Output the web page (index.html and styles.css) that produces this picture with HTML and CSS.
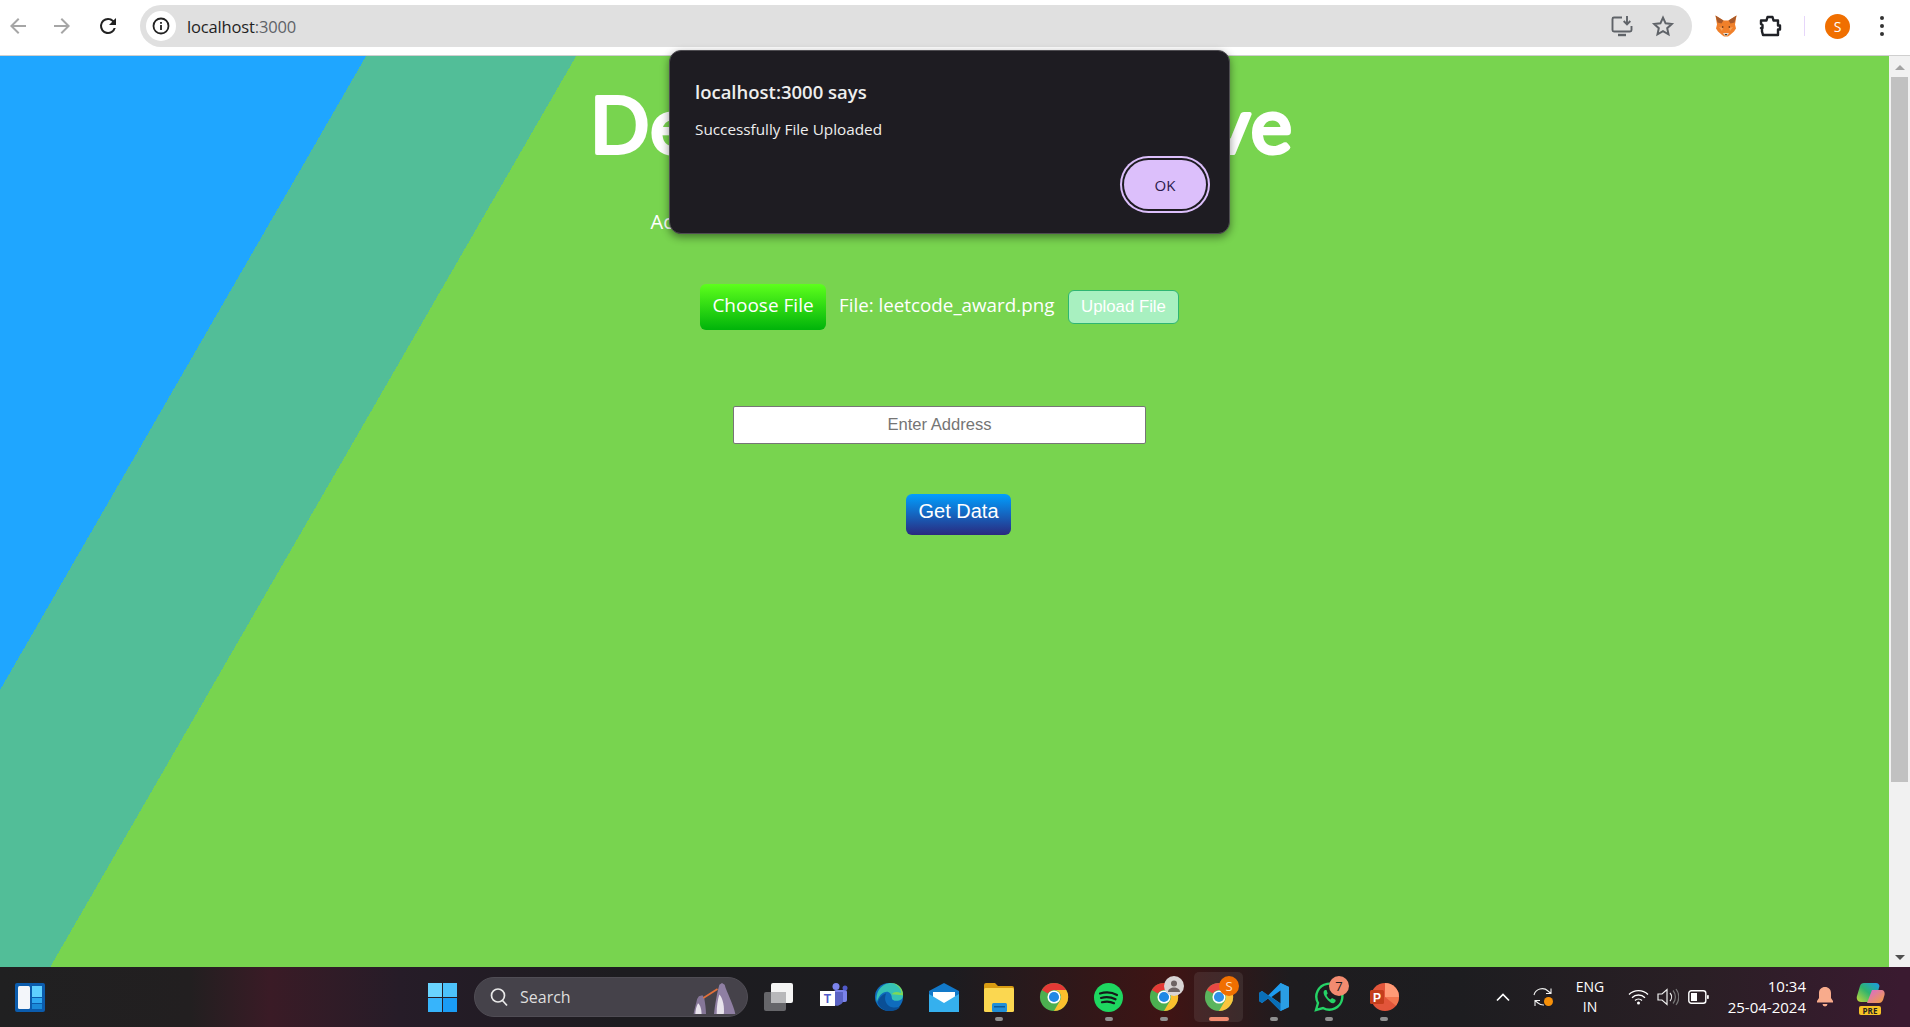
FILE: index.html
```html
<!DOCTYPE html>
<html lang="en">
<head>
  <meta charset="UTF-8">
  <title>localhost:3000</title>
  <link rel="stylesheet" href="styles.css">
</head>
<body>

  <svg class="defs" width="0" height="0">
    <symbol id="chrome" viewBox="0 0 32 32">
      <circle cx="16" cy="16" r="15" fill="#4caf50"/>
      <path d="M3 8.5A15 15 0 0 1 29 8.5H16a7.5 7.5 0 0 0-6.5 3.75z" fill="#e53935"/>
      <path d="M29 8.5A15 15 0 0 1 16 31l6.5-11.25A7.5 7.5 0 0 0 22.5 12.25 7.5 7.5 0 0 0 16 8.5z" fill="#fbc02d"/>
      <circle cx="16" cy="16" r="7" fill="#fff"/>
      <circle cx="16" cy="16" r="5.4" fill="#1e88e5"/>
    </symbol>
  </svg>

  <header class="toolbar">
    <div class="nav-btn">
      <svg width="24" height="24" viewBox="0 0 24 24"><path fill="#a6a6a6" d="M20 11H7.83l5.59-5.59L12 4l-8 8 8 8 1.41-1.41L7.83 13H20z"/></svg>
    </div>
    <div class="nav-btn">
      <svg width="24" height="24" viewBox="0 0 24 24"><path fill="#a6a6a6" d="M4 11h12.17l-5.59-5.59L12 4l8 8-8 8-1.41-1.41L16.17 13H4z"/></svg>
    </div>
    <div class="nav-btn reload">
      <svg width="24" height="24" viewBox="0 0 24 24"><path fill="#222" d="M17.65 6.35A7.95 7.95 0 0 0 12 4a8 8 0 1 0 7.73 10h-2.08A6 6 0 1 1 12 6c1.66 0 3.14.69 4.22 1.78L13 11h7V4z"/></svg>
    </div>

    <div class="omnibox">
      <div class="site-info">
        <svg width="20" height="20" viewBox="0 0 20 20"><circle cx="10" cy="10" r="7.5" fill="none" stroke="#222" stroke-width="1.8"/><rect x="9.1" y="9" width="1.8" height="5" fill="#222"/><rect x="9.1" y="6" width="1.8" height="1.8" fill="#222"/></svg>
      </div>
      <div class="url">localhost<span>:3000</span></div>
      <div class="omni-icons">
        <svg width="24" height="24" viewBox="0 0 24 24" fill="none" stroke="#5f6368" stroke-width="1.9"><path d="M12 3.5H4a1.5 1.5 0 0 0-1.5 1.5v11A1.5 1.5 0 0 0 4 17.5h16a1.5 1.5 0 0 0 1.5-1.5v-4"/><path d="M8 21h8" stroke-width="2.4"/><path d="M17 2v8M13.7 7l3.3 3.3L20.3 7"/></svg>
        <svg width="24" height="24" viewBox="0 0 24 24" fill="none" stroke="#5f6368" stroke-width="2"><path d="M12 3.6l2.6 5.7 6.2.7-4.6 4.2 1.3 6.1-5.5-3.1-5.5 3.1 1.3-6.1L3.200 10l6.200-.7z"/></svg>
      </div>
    </div>

    <div class="ext fox">
      <svg width="24" height="24" viewBox="0 0 24 24">
        <path fill="#f0802a" d="M1.500 1.500l8 5h5l8-5-1.500 9 1 4-2 3-4 3.500-2 1.500h-4l-2-1.500-4-3.500-2-3 1-4z"/>
        <path fill="#a85a2a" d="M9.500 6.500L1.500 1.500l2 7 4 1zM14.500 6.500l8-5-2 7-4 1z"/>
        <path fill="#f6a45b" d="M5 13l4 1-1 3zM19 13l-4 1 1 3z"/>
        <path fill="#5e3418" d="M8 12l2 1-2 1zM16 12l-2 1 2 1z"/>
        <path fill="#e4d8cc" d="M9 19h6l-1.500 2.500h-3z"/>
        <path fill="#222" d="M10.500 20h3l-1.500 1.500z"/>
      </svg>
    </div>
    <div class="ext puzzle">
      <svg width="24" height="24" viewBox="0 0 24 24" fill="none" stroke="#1f2126" stroke-width="2.4" stroke-linejoin="round"><path d="M3 6.500h5.500l1-3.500h5l1 3.500H20v5h2v4h-2V21H5l-1-3.500V15l-1-1h1.500v-3L3 10z"/></svg>
    </div>
    <div class="ext-sep"></div>
    <div class="avatar">S</div>
    <div class="chrome-menu"><i></i><i></i><i></i></div>
  </header>

  <div class="viewport">
    <main class="page">
      <h1 class="app-title">
        <svg width="720" height="100" viewBox="0 0 720 100"><text class="title-text" x="360" y="75" textLength="702" lengthAdjust="spacing">Decentralized Drive</text></svg>
      </h1>
      <p class="account">Account: Not connected to a wallet yet</p>

      <form class="upload-row">
        <label class="choose-btn">Choose File</label>
        <span class="file-name">File: leetcode_award.png</span>
        <button type="button" class="upload-btn">Upload File</button>
      </form>

      <input class="address-input" type="text" placeholder="Enter Address">
      <button type="button" class="get-btn">Get Data</button>
    </main>

    <div class="scrollbar">
      <span class="arrow-up"></span>
      <div class="thumb"></div>
      <span class="arrow-down"></span>
    </div>
  </div>

  <footer class="taskbar">
    <div class="widgets">
      <svg width="30" height="29" viewBox="0 0 30 29"><rect width="30" height="29" rx="2" fill="#0b5cad"/><rect x="3" y="3" width="12" height="23" rx="1.500" fill="#f3f6fa"/><rect x="17" y="3" width="10" height="11" fill="#5fd0ff"/><rect x="17" y="15" width="10" height="5" fill="#2ea8f0"/><rect x="17" y="21" width="10" height="5" fill="#1a8ad8"/></svg>
    </div>
    <div class="win-logo">
      <svg width="29" height="29" viewBox="0 0 29 29"><rect width="14" height="14" fill="#6ad4ff"/><rect x="15" width="14" height="14" fill="#4cc2fb"/><rect y="15" width="14" height="14" fill="#37b4fb"/><rect x="15" y="15" width="14" height="14" fill="#1a9cf5"/></svg>
    </div>
    <div class="search-box">
      <svg width="22" height="22" viewBox="0 0 22 22" fill="none" stroke="#e8e8e8" stroke-width="1.700"><circle cx="10" cy="9.500" r="6.500"/><path d="M14.500 14.500L19 19.500"/></svg>
      <span>Search</span>
      <svg class="penguins" width="48" height="32" viewBox="0 0 48 36">
        <path fill="#8f7fa3" d="M30 3l3-2 3 2c2 8 10 22 12 33H24c1-10 3-20 4-25z"/>
        <path fill="#e8e3ec" d="M30 14c4 4 6 14 5 22h-8c0-8 1-16 3-22z"/>
        <path fill="#857698" d="M7 16l4-1 2 3c1 6 2 12 2 18H1c1-6 3-12 4-17z"/>
        <path fill="#e8e3ec" d="M6 24c3 2 4 8 4 12H3c0-4 1-8 3-12z"/>
        <path fill="none" stroke="#e2703a" stroke-width="2" d="M12 18L28 8"/>
      </svg>
    </div>

    <div class="apps">
      <div class="app">
        <svg width="30" height="28" viewBox="0 0 30 28"><rect y="9" width="22" height="19" rx="2" fill="#66666a"/><rect x="7" width="22" height="20" rx="2" fill="#f4f4f4"/><rect x="7" y="9" width="15" height="11" fill="#b8b8ba"/></svg>
      </div>
      <div class="app">
        <svg width="30" height="29" viewBox="0 0 30 29"><rect x="15" y="7" width="13" height="12" rx="2" fill="#7b83eb"/><circle cx="17" cy="3.500" r="3.500" fill="#7b83eb"/><circle cx="26" cy="5" r="2.500" fill="#5059c9"/><path d="M13 9h11v10a7 7 0 0 1-11 2z" fill="#5b63c4"/><rect x="1" y="8" width="15" height="15" fill="#fff"/><text class="teams-t" x="8.500" y="20">T</text></svg>
      </div>
      <div class="app">
        <svg width="30" height="30" viewBox="0 0 32 32"><circle cx="16" cy="16" r="15" fill="#0f6cbd"/><path d="M3 21C1 10 9 1 18 1c8 0 13 6 13 13 0 4-3 6-7 6-3 0-5-1-5-3 0-5-4-8-8-6-5 2-6 6-8 10z" fill="#35c1b5"/><path d="M31 14c0-7-5-13-13-13 7 1 11 6 11 11-4-2-8-2-10 1z" fill="#7ed957"/><path d="M4 22c2 6 8 9 13 9s9-2 11-5c-5 2-12 2-15-4-2-4-1-7 0-10-5 2-8 5-9 10z" fill="#0a4f96"/></svg>
      </div>
      <div class="app">
        <svg width="30" height="29" viewBox="0 0 30 29"><path d="M0 8L15 0l15 8v21H0z" fill="#1279c9"/><path d="M4 9h22v8l-11 7-11-7z" fill="#fff"/><path d="M0 11l15 9 15-9v18H0z" fill="#35b0ee"/></svg>
      </div>
      <div class="app running">
        <svg width="30" height="29" viewBox="0 0 30 29"><path d="M0 2a2 2 0 0 1 2-2h9l3 3h14a2 2 0 0 1 2 2v5H0z" fill="#d99c12"/><rect y="5" width="30" height="24" rx="1.500" fill="#fbd750"/><rect x="8" y="20" width="15" height="9" rx="1.500" fill="#1f8fd8"/><rect x="10" y="23" width="11" height="1.500" fill="#0c5a98"/></svg>
      </div>
      <div class="app">
        <svg width="30" height="30"><use href="#chrome"/></svg>
      </div>
      <div class="app running">
        <svg width="29" height="29" viewBox="0 0 29 29"><circle cx="14.500" cy="14.500" r="14.500" fill="#1ed760"/><path d="M6 10.500c6-1.800 12-1.300 17 1.500M7 15c5-1.400 10-1 14.500 1.300M8 19.200c4.200-1 8.500-.8 12 1" fill="none" stroke="#15191a" stroke-width="2.200" stroke-linecap="round"/></svg>
      </div>
      <div class="app running">
        <svg width="30" height="30"><use href="#chrome"/></svg>
        <span class="profile-badge">
          <svg width="14" height="14" viewBox="0 0 14 14"><circle cx="7" cy="4.500" r="3" fill="#6d6464"/><path d="M1 13c0-3 3-4.500 6-4.500s6 1.500 6 4.500z" fill="#6d6464"/></svg>
        </span>
      </div>
      <div class="app active">
        <svg width="30" height="30"><use href="#chrome"/></svg>
        <span class="s-badge">S</span>
      </div>
      <div class="app running">
        <svg width="30" height="30" viewBox="0 0 30 30"><path d="M21.500 1L30 5v20l-8.500 4L9 16.500 3 21l-3-2V11l3-2 6 4.500z" fill="#1d9bf0"/><path d="M21.500 1L30 5v20l-8.500 4z" fill="#2a9ee4"/><path d="M21.500 8.500L12.500 15l9 6.500z" fill="#1c1c20"/><path d="M0 11l3-2 18.500 12.500V29L9 16.500 3 21l-3-2z" fill="#0a6fb8"/></svg>
      </div>
      <div class="app running">
        <svg width="30" height="30" viewBox="0 0 30 30"><path d="M2 28l2-7A13 13 0 1 1 9 26z" fill="none" stroke="#25d366" stroke-width="2.400"/><path d="M11 8c-2 1-2 4 1 8s6 6 8 5 2-3 1-3.500l-3-1.500-1.500 1.500c-2-1-3-2.500-4-4.500l1.200-1.500L12.500 8z" fill="#25d366"/></svg>
        <span class="count-badge">7</span>
      </div>
      <div class="app running">
        <svg width="30" height="30" viewBox="0 0 30 30"><circle cx="16" cy="15" r="14" fill="#e2553a"/><path d="M16 1a14 14 0 0 1 14 14H16z" fill="#ff9a76"/><path d="M16 15h14a14 14 0 0 1-3 8.700L16 15z" fill="#f3764f"/><rect x="1" y="8" width="14" height="14" rx="1.500" fill="#c43e1c"/><text class="ppt-p" x="8" y="19.500">P</text></svg>
      </div>
    </div>

    <div class="tray">
      <div class="tray-slot chevron">
        <svg width="16" height="16" viewBox="0 0 16 16" fill="none" stroke="#fff" stroke-width="1.700"><path d="M2 11.500L8 5.500l6 6"/></svg>
      </div>
      <div class="tray-slot sync">
        <svg width="22" height="22" viewBox="0 0 22 22" fill="none" stroke="#f0f0f0" stroke-width="1.100"><path d="M2 9a8.500 8.500 0 0 1 14-4l3 2.500M19 2.500v5h-5"/><path d="M3 14.500l3 2.500a8.500 8.500 0 0 0 6 2M3 20v-5.500h5"/><circle cx="16.500" cy="15.500" r="4.500" fill="#f79009" stroke="none"/></svg>
      </div>
      <div class="lang"><span>ENG</span><span>IN</span></div>
      <div class="tray-slot wifi">
        <svg width="21" height="16" viewBox="0 0 21 16" fill="none" stroke="#fff" stroke-width="1.300"><path d="M1 5.500a13.500 13.500 0 0 1 19 0M4 8.700a9.200 9.200 0 0 1 13 0M7 11.500a5 5 0 0 1 7 0"/><circle cx="10.500" cy="14" r="1.500" fill="#fff" stroke="none"/></svg>
      </div>
      <div class="tray-slot">
        <svg width="22" height="18" viewBox="0 0 22 18" fill="none" stroke="#f0f0f0" stroke-width="1.200"><path d="M1 6h4l5-4.500v15L5 12H1z"/><path d="M13 5a6 6 0 0 1 0 8" /><path d="M16 2.500a10 10 0 0 1 0 13M19 1a13 13 0 0 1 0 16" stroke="#777"/></svg>
      </div>
      <div class="tray-slot">
        <svg width="21" height="14" viewBox="0 0 21 14"><rect x=".8" y=".8" width="17" height="12.400" rx="2.500" fill="none" stroke="#fff" stroke-width="1.400"/><rect x="3" y="3" width="6" height="8" fill="#fff"/><rect x="19" y="5" width="1.800" height="4" rx=".8" fill="#fff"/></svg>
      </div>
      <div class="clock"><span>10:34</span><span>25-04-2024</span></div>
      <div class="tray-slot bell">
        <svg width="18" height="20" viewBox="0 0 18 20"><path d="M9 0c-3.500 0-6 2.500-6 6v5L1 14v1.500h16V14l-2-3V6c0-3.500-2.500-6-6-6z" fill="#f8ab8c"/><path d="M6.500 17h5a2.500 2.500 0 0 1-5 0z" fill="#f8ab8c"/></svg>
      </div>
      <div class="copilot">
        <svg width="29" height="23" viewBox="0 0 29 23">
          <defs>
            <linearGradient id="copA" x1="0" y1="1" x2="1" y2="0"><stop offset="0" stop-color="#c5d93a"/><stop offset=".5" stop-color="#2fb46e"/><stop offset="1" stop-color="#1a9be8"/></linearGradient>
            <linearGradient id="copB" x1="0" y1="0" x2="1" y2="1"><stop offset="0" stop-color="#d768d8"/><stop offset="1" stop-color="#f4a13a"/></linearGradient>
          </defs>
          <path d="M8 1h12c2 0 3 1 3.500 3L19 20H5c-3 0-5-3-4-6L4 4c.500-2 2-3 4-3z" fill="url(#copA)"/>
          <path d="M16 8h9c3 0 4 2 3.500 5l-1.500 5c-1 2-2 3-4 3H11z" fill="url(#copB)"/>
        </svg>
        <span class="pre-tag">PRE</span>
      </div>
    </div>
  </footer>

  <div class="alert" role="alertdialog">
    <h2>localhost:3000 says</h2>
    <p>Successfully File Uploaded</p>
    <div class="alert-actions">
      <button type="button" class="alert-ok">OK</button>
    </div>
  </div>

</body>
</html>
```

FILE: styles.css
```css
* {
  box-sizing: border-box;
}
html, body {
  margin: 0;
  height: 100%;
}
body {
  width: 1910px;
  height: 1027px;
  overflow: hidden;
  display: flex;
  flex-direction: column;
  position: relative;
  background-color: white;
  font-family: "Open Sans", "Noto Sans", sans-serif;
}
.defs {
  position: absolute;
}

/* browser bar */
.toolbar {
  height: 56px;
  flex: none;
  display: flex;
  align-items: center;
  padding-bottom: 3px;
  border-bottom: 1px solid #cfcfcf;
}
.nav-btn {
  width: 36px;
  height: 36px;
  margin-right: 8px;
  display: flex;
  align-items: center;
  justify-content: center;
}
.reload {
  margin-left: 2px;
  margin-right: 14px;
}
.omnibox {
  width: 1552px;
  height: 42px;
  border-radius: 21px;
  background-color: #e0e0e0;
  display: flex;
  align-items: center;
  padding-left: 6px;
  padding-right: 17px;
}
.site-info {
  width: 30px;
  height: 30px;
  border-radius: 50%;
  background-color: white;
  display: flex;
  align-items: center;
  justify-content: center;
}
.url {
  margin-left: 11px;
  font-size: 16.500px;
  letter-spacing: -0.15px;
  color: #1f1f1f;
}
.url span {
  color: #5f6368;
}
.omni-icons {
  margin-left: auto;
  display: flex;
  gap: 17px;
}
.ext {
  width: 36px;
  height: 36px;
  display: flex;
  align-items: center;
  justify-content: center;
}
.fox {
  margin-left: 16px;
}
.puzzle {
  margin-left: 8px;
}
.ext-sep {
  width: 1px;
  height: 20px;
  margin-left: 16px;
  background-color: #e6d6fa;
}
.avatar {
  width: 25px;
  height: 25px;
  margin-left: 20px;
  border-radius: 50%;
  background-color: #f06f00;
  color: white;
  font-size: 14px;
  display: flex;
  align-items: center;
  justify-content: center;
}
.chrome-menu {
  margin-left: 30px;
  display: flex;
  flex-direction: column;
  gap: 4px;
}
.chrome-menu i {
  display: block;
  width: 4px;
  height: 4px;
  border-radius: 50%;
  background-color: #333;
}

/* page */
.viewport {
  flex: 1;
  display: flex;
  min-height: 0;
}
.page {
  flex: 1;
  display: flex;
  flex-direction: column;
  align-items: center;
  padding-right: 7px;
  background: linear-gradient(120deg, #1fa6ff 317px, #52be98 317px, #52be98 499px, #78d44f 499px);
  color: white;
}
.app-title {
  margin: 22px 0 0;
  height: 100px;
}
.title-text {
  font-family: "Lato", sans-serif;
  font-weight: 400;
  font-size: 78px;
  text-anchor: middle;
  fill: white;
  stroke: white;
  stroke-width: 4px;
  stroke-linejoin: round;
}
.account {
  width: 578px;
  margin: 31px 0 0 -3px;
  font-size: 20px;
  line-height: 26px;
}
.upload-row {
  margin-top: 49px;
  margin-left: -3px;
  display: flex;
  align-items: center;
}
.choose-btn {
  width: 126px;
  height: 46px;
  border-radius: 6px;
  background: linear-gradient(#5dff1c, #00b30a);
  font-size: 19px;
  padding-bottom: 5px;
  display: flex;
  align-items: center;
  justify-content: center;
}
.file-name {
  margin-left: 13px;
  width: 218px;
  font-size: 18.800px;
  padding-bottom: 5px;
  white-space: nowrap;
}
.upload-btn {
  width: 111px;
  height: 34px;
  margin-left: 11px;
  border: 1px solid #2fb673;
  border-radius: 6px;
  background-color: #a8f0c0;
  color: white;
  font-family: "Liberation Sans", Arial, sans-serif;
  font-size: 16.800px;
  padding: 0;
}
.address-input {
  width: 413px;
  height: 38px;
  margin-top: 76px;
  margin-left: -3px;
  border: 1px solid #767676;
  border-radius: 2px;
  background-color: white;
  text-align: center;
  font-family: "Liberation Sans", Arial, sans-serif;
  font-size: 16.600px;
}
.address-input::placeholder {
  color: #757575;
}
.get-btn {
  width: 105px;
  height: 41px;
  margin-top: 50px;
  margin-left: 35px;
  border: none;
  border-radius: 6px;
  background: linear-gradient(#009fff, #2a2a7f);
  color: white;
  font-family: "Liberation Sans", Arial, sans-serif;
  font-size: 20px;
  padding: 0 0 6px;
}

/* scrollbar */
.scrollbar {
  width: 21px;
  flex: none;
  background-color: #f1f1f1;
  display: flex;
  flex-direction: column;
  align-items: center;
  padding-top: 9px;
}
.arrow-up, .arrow-down {
  width: 0;
  height: 0;
  border-left: 5px solid transparent;
  border-right: 5px solid transparent;
}
.arrow-up {
  border-bottom: 5px solid #a3a3a3;
}
.arrow-down {
  margin-top: auto;
  margin-bottom: 7px;
  border-top: 5px solid #505050;
}
.thumb {
  width: 17px;
  height: 705px;
  margin-top: 7px;
  background-color: #c1c1c1;
}

/* windows taskbar */
.taskbar {
  height: 60px;
  flex: none;
  display: flex;
  align-items: center;
  color: white;
  background: linear-gradient(90deg, #202021 0, #221f20 190px, #3a1b26 270px, #261c28 400px, #1d1c20 620px, #1c1c20 950px, #3f1414 1170px, #1e1c1f 1290px, #1d1d20 1460px, #2a1f25 1700px, #3a1a30 1900px);
}
.widgets {
  margin-left: 15px;
  height: 29px;
}
.win-logo {
  margin-left: 383px;
  height: 29px;
}
.search-box {
  width: 274px;
  height: 40px;
  margin-left: 17px;
  border-radius: 20px;
  background-color: #45424a;
  border: 1px solid #504d55;
  display: flex;
  align-items: center;
  padding-left: 13px;
  font-size: 16px;
  color: #dedede;
  overflow: hidden;
}
.search-box span {
  margin-left: 10px;
}
.penguins {
  margin-left: auto;
  margin-right: 9px;
  margin-top: 2px;
}
.apps {
  display: flex;
  margin-left: 3px;
  height: 60px;
}
.app {
  width: 55px;
  display: flex;
  align-items: center;
  justify-content: center;
  position: relative;
}
.running::after, .active::after {
  content: "";
  position: absolute;
  bottom: 6px;
  left: 50%;
  width: 8px;
  height: 4px;
  margin-left: -4px;
  border-radius: 2px;
  background-color: #8f8f8f;
}
.active::after {
  width: 20px;
  margin-left: -10px;
  background-color: #f28b70;
}
.active::before {
  content: "";
  position: absolute;
  top: 5px;
  left: 3px;
  width: 49px;
  height: 50px;
  border-radius: 5px;
  background-color: rgba(255, 255, 255, 0.08);
}
.teams-t {
  font-family: "Liberation Sans", sans-serif;
  font-weight: bold;
  font-size: 12px;
  fill: #5059c9;
  text-anchor: middle;
}
.ppt-p {
  font-family: "Liberation Sans", sans-serif;
  font-weight: bold;
  font-size: 12px;
  fill: white;
  text-anchor: middle;
}
.profile-badge {
  position: absolute;
  top: 9px;
  right: 7px;
  width: 20px;
  height: 20px;
  border-radius: 50%;
  background-color: #d8d4d4;
  display: flex;
  align-items: center;
  justify-content: center;
}
.s-badge, .count-badge {
  position: absolute;
  top: 9px;
  right: 7px;
  width: 20px;
  height: 20px;
  border-radius: 50%;
  display: flex;
  align-items: center;
  justify-content: center;
  font-size: 13px;
}
.s-badge {
  background-color: #f06f00;
  color: #ffe3cc;
}
.count-badge {
  background-color: #f28b70;
  color: #1c1c20;
  font-size: 13px;
}
.tray {
  margin-left: auto;
  display: flex;
  align-items: center;
  padding-right: 14px;
}
.tray-slot {
  width: 30px;
  height: 30px;
  display: flex;
  align-items: center;
  justify-content: center;
}
.sync {
  width: 50px;
}
.wifi {
  margin-left: 11px;
}
.lang {
  width: 44px;
  display: flex;
  flex-direction: column;
  align-items: center;
  font-size: 14px;
  line-height: 20px;
}
.clock {
  width: 93px;
  display: flex;
  flex-direction: column;
  align-items: flex-end;
  font-size: 15px;
  line-height: 21px;
}
.bell {
  width: 38px;
}
.copilot {
  width: 52px;
  height: 30px;
  position: relative;
  display: flex;
  justify-content: center;
}
.pre-tag {
  position: absolute;
  left: 15px;
  bottom: -3px;
  width: 22px;
  height: 9px;
  border-radius: 2px;
  background-color: #f7c326;
  color: #222;
  font-size: 8px;
  font-weight: bold;
  line-height: 9px;
  text-align: center;
}

/* js alert */
.alert {
  position: absolute;
  top: 50px;
  left: 669px;
  width: 561px;
  height: 184px;
  padding: 29px 26px 0 25px;
  border-radius: 12px;
  border: 1px solid #4f4d52;
  background-color: #1e1c22;
  box-shadow: 0 3px 8px rgba(0, 0, 0, 0.45);
  color: #eee;
}
.alert h2 {
  margin: 0;
  font-size: 18.500px;
  line-height: 24px;
  font-weight: 600;
}
.alert p {
  margin: 15px 0 0;
  font-size: 15.300px;
  line-height: 20px;
}
.alert-actions {
  display: flex;
  justify-content: flex-end;
  margin-top: 21px;
}
.alert-ok {
  width: 82px;
  height: 49px;
  margin-right: -3px;
  border: none;
  border-radius: 25px;
  background-color: #dcbffb;
  box-shadow: 0 0 0 2px #1e1c22, 0 0 0 4px #dcbffb;
  color: #2a1a4a;
  font-family: "Open Sans", sans-serif;
  font-size: 15px;
  padding: 0;
}
```
